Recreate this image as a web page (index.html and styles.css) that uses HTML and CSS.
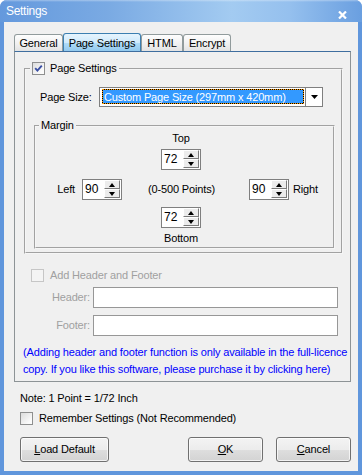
FILE: index.html
```html
<!DOCTYPE html>
<html>
<head>
<meta charset="utf-8">
<title>Settings</title>
<link rel="stylesheet" href="styles.css">
</head>
<body>
<div class="window">
  <div class="titlebar">
    <span class="title">Settings</span>
    <svg class="close" width="9" height="8" viewBox="0 0 9 8"><path d="M1 0.5 L8 7.5 M8 0.5 L1 7.5" stroke="#fff" stroke-width="2.2" fill="none"/></svg>
  </div>
  <div class="client">
    <div class="tabs">
      <div class="tab t-general">General</div>
      <div class="tab active t-page">Page Settings</div>
      <div class="tab t-html">HTML</div>
      <div class="tab t-enc">Encrypt</div>
    </div>
    <div class="panel">
      <fieldset class="group outer">
        <legend class="cb-legend"><span class="cb"><svg width="9" height="9" viewBox="0 0 9 9"><path d="M1.2 4.2 L3.4 6.6 L7.8 1.6" stroke="#3a4fa3" stroke-width="1.9" fill="none"/></svg></span><span>Page Settings</span></legend>
        <div class="pagesize">
          <span class="ps-label">Page Size:</span>
          <div class="combo">
            <div class="combo-val"><span class="sel">Custom Page Size (297mm x 420mm)</span></div>
            <div class="combo-btn"><svg width="7" height="4" viewBox="0 0 7 4"><path d="M0 0 H7 L3.5 4 Z" fill="#000"/></svg></div>
          </div>
        </div>
        <fieldset class="group margin">
          <legend class="m-legend">Margin</legend>
          <div class="mgrid">
            <span class="m-top">Top</span>
            <div class="spin s-top"><span class="val">72</span><span class="arrows"><span class="up"></span><span class="dn"></span></span></div>
            <div class="m-left"><span>Left</span><div class="spin"><span class="val">90</span><span class="arrows"><span class="up"></span><span class="dn"></span></span></div></div>
            <span class="m-range">(0-500 Points)</span>
            <div class="m-right"><div class="spin"><span class="val">90</span><span class="arrows"><span class="up"></span><span class="dn"></span></span></div><span>Right</span></div>
            <div class="spin s-bottom"><span class="val">72</span><span class="arrows"><span class="up"></span><span class="dn"></span></span></div>
            <span class="m-bottom">Bottom</span>
          </div>
        </fieldset>
      </fieldset>
      <div class="hf-check disabled"><span class="cb dis"></span><span>Add Header and Footer</span></div>
      <div class="hf-row hf-header disabled"><span class="hf-label">Header:</span><div class="textbox"></div></div>
      <div class="hf-row hf-footer disabled"><span class="hf-label">Footer:</span><div class="textbox"></div></div>
      <p class="notice">(Adding header and footer function is only available in the full-licence<br>copy. If you like this software, please purchase it by clicking here)</p>
    </div>
    <div class="note">Note: 1 Point = 1/72 Inch</div>
    <div class="remember"><span class="cb"></span><span>Remember Settings (Not Recommended)</span></div>
    <div class="buttons">
      <button class="btn b-load"><span><u>L</u>oad Default</span></button>
      <span class="spacer"></span>
      <button class="btn b-ok"><span><u>O</u>K</span></button>
      <button class="btn b-cancel"><span><u>C</u>ancel</span></button>
    </div>
  </div>
</div>
</body>
</html>
```
FILE: styles.css
```css
* { box-sizing: border-box; }
html, body { margin: 0; padding: 0; background: #fff; }
body {
  font-family: "Liberation Sans", Arial, sans-serif;
  font-size: 11px;
  letter-spacing: -0.15px;
  line-height: 13px;
  color: #000;
}
.window {
  width: 362px;
  height: 475px;
  background: #6096dc;
  border-radius: 7px 7px 0 0;
  display: flex;
  flex-direction: column;
  overflow: hidden;
}
.titlebar {
  height: 22px;
  flex: none;
  display: flex;
  align-items: center;
  padding: 1px 15px 0 6px;
  background:
    linear-gradient(to bottom, rgba(255,255,255,0.35) 0, rgba(255,255,255,0) 2px),
    linear-gradient(to right, #6499dd 0%, #7aaae3 30%, #a3cbf1 64%, #95c0ee 80%, #6a9fe0 100%);
}
.title {
  flex: 1;
  font-size: 12px;
  letter-spacing: -0.3px;
  color: #fff;
}
.close { align-self: flex-start; margin-top: 10px; }
.client {
  flex: 1;
  margin: 0 4px 4px;
  background: #f0f0f0;
  display: flex;
  flex-direction: column;
}
/* tabs */
.tabs {
  display: flex;
  align-items: flex-end;
  height: 18px;
  margin: 11px 0 0 10px;
}
.tab {
  height: 17px;
  border: 1px solid #919b9c;
  border-bottom: none;
  border-radius: 3px 3px 0 0;
  background: linear-gradient(#fefefe, #f2f2f2 50%, #e3e3e3);
  display: flex;
  align-items: center;
  justify-content: center;
  padding-top: 1px;
}
.tab.active {
  height: 18px;
  border-color: #3c7fb1;
  background: linear-gradient(#e6f4fd, #cfeafc 50%, #b0dcf8 52%, #92c9ee);
}
.t-general { width: 49px; }
.t-page { width: 78px; }
.t-html { width: 42px; }
.t-enc { width: 48px; }
.panel {
  margin-left: 10px;
  width: 337px;
  height: 331px;
  border: 1px solid #8d9396;
  border-top-color: #3f6e9f;
  display: flex;
  flex-direction: column;
}
/* groups */
.group {
  padding: 0;
  border: 2px groove #f6f6f6;
  min-width: 0;
}
legend {
  padding: 0 2px;
  height: 13px;
  line-height: 13px;
}
.outer { margin: 10px 0 0 9px; width: 319px; }
.cb-legend { margin-left: 4px; display: flex; align-items: center; gap: 5px; }
.cb {
  width: 13px;
  height: 13px;
  flex: none;
  border: 1px solid #8e8f8f;
  background: linear-gradient(135deg, #dcdcdc, #fbfbfb 80%);
  display: flex;
  align-items: center;
  justify-content: center;
}
.cb.dis { border-color: #c6c6c6; background: #f4f4f4; }
.pagesize {
  margin-top: 12px;
  height: 20px;
  padding-left: 14px;
  display: flex;
  align-items: center;
}
.ps-label { width: 59px; }
.combo {
  width: 224px;
  height: 20px;
  border: 1px solid #7f7f7f;
  background: #fff;
  display: flex;
}
.combo-val { flex: 1; padding: 1px 1px 2px 2px; }
.sel {
  display: block;
  height: 100%;
  border: 1px dotted #ff9a00;
  background: linear-gradient(#3399ff, #3399ff) padding-box, #000 border-box;
  color: #fff;
  padding-left: 1px;
  line-height: 14px;
  white-space: nowrap;
  overflow: hidden;
}
.combo-btn {
  width: 17px;
  border-left: 1px solid #7f7f7f;
  display: flex;
  align-items: center;
  justify-content: center;
}
.margin { margin: 12px 0 3px 8px; width: 301px; }
.m-legend { margin-left: 3px; }
.mgrid {
  display: grid;
  grid-template-columns: 86px 39px 40px 48px 1fr;
  grid-template-rows: 13px 4px 21px 9px 21px 7px 21px 4px 13px;
  padding-bottom: 2px;
}
.m-top { grid-column: 3; grid-row: 1; justify-self: center; }
.s-top { grid-column: 3; grid-row: 3; }
.m-left { grid-column: 1; grid-row: 5; justify-self: end; display: flex; align-items: center; gap: 7px; }
.m-range { grid-column: 2 / 5; grid-row: 5; align-self: center; padding-left: 26px; white-space: nowrap; }
.m-right { grid-column: 5; grid-row: 5; display: flex; align-items: center; gap: 4px; }
.s-bottom { grid-column: 3; grid-row: 7; }
.m-bottom { grid-column: 3; grid-row: 9; justify-self: center; white-space: nowrap; }
.spin {
  width: 40px;
  height: 21px;
  border: 1px solid #7f7f7f;
  background: #fff;
  display: flex;
  justify-content: space-between;
  padding: 0 1px 0 2px;
}
.spin .val { font-size: 12px; line-height: 19px; letter-spacing: 0; }
.arrows { display: flex; flex-direction: column; width: 16px; }
.arrows span {
  height: 9px;
  background: #ececec;
  border: 1px solid;
  border-color: #fff #7a7a7a #7a7a7a #fff;
  display: flex;
  align-items: center;
  justify-content: center;
}
.arrows .up::after {
  content: "";
  border-left: 3.5px solid transparent;
  border-right: 3.5px solid transparent;
  border-bottom: 4px solid #000;
}
.arrows .dn::after {
  content: "";
  border-left: 3.5px solid transparent;
  border-right: 3.5px solid transparent;
  border-top: 4px solid #000;
}
/* header / footer */
.disabled { color: #a0a0a0; }
.hf-check {
  margin-top: 15px;
  padding-left: 16px;
  height: 13px;
  display: flex;
  align-items: center;
  gap: 6px;
}
.hf-row { display: flex; align-items: center; gap: 3px; height: 21px; }
.hf-header { margin-top: 5px; }
.hf-footer { margin-top: 7px; }
.hf-label { width: 75px; text-align: right; }
.textbox { width: 245px; height: 21px; border: 1px solid #979797; background: #fff; }
.notice {
  margin: 8px 0 0;
  padding-left: 8px;
  line-height: 17px;
  color: #0000ff;
  white-space: nowrap;
}
/* bottom */
.note { margin-top: 10px; padding-left: 16px; }
.remember {
  margin-top: 7px;
  padding-left: 16px;
  height: 13px;
  display: flex;
  align-items: center;
  gap: 6px;
}
.buttons {
  margin-top: 12px;
  padding: 0 7px 0 16px;
  display: flex;
  gap: 13px;
}
.spacer { flex: 1; }
.btn {
  height: 25px;
  margin: 0;
  padding: 0;
  border: 1px solid #707070;
  border-radius: 3px;
  background: linear-gradient(#f3f3f3 0%, #ececec 50%, #dedede 51%, #d3d3d3 100%);
  box-shadow: inset 0 0 0 1px rgba(255,255,255,0.7);
  font: inherit;
  letter-spacing: inherit;
  color: #000;
  display: flex;
  align-items: center;
  justify-content: center;
}
.b-load { width: 89px; }
.b-ok { width: 75px; }
.b-cancel { width: 75px; }
```
